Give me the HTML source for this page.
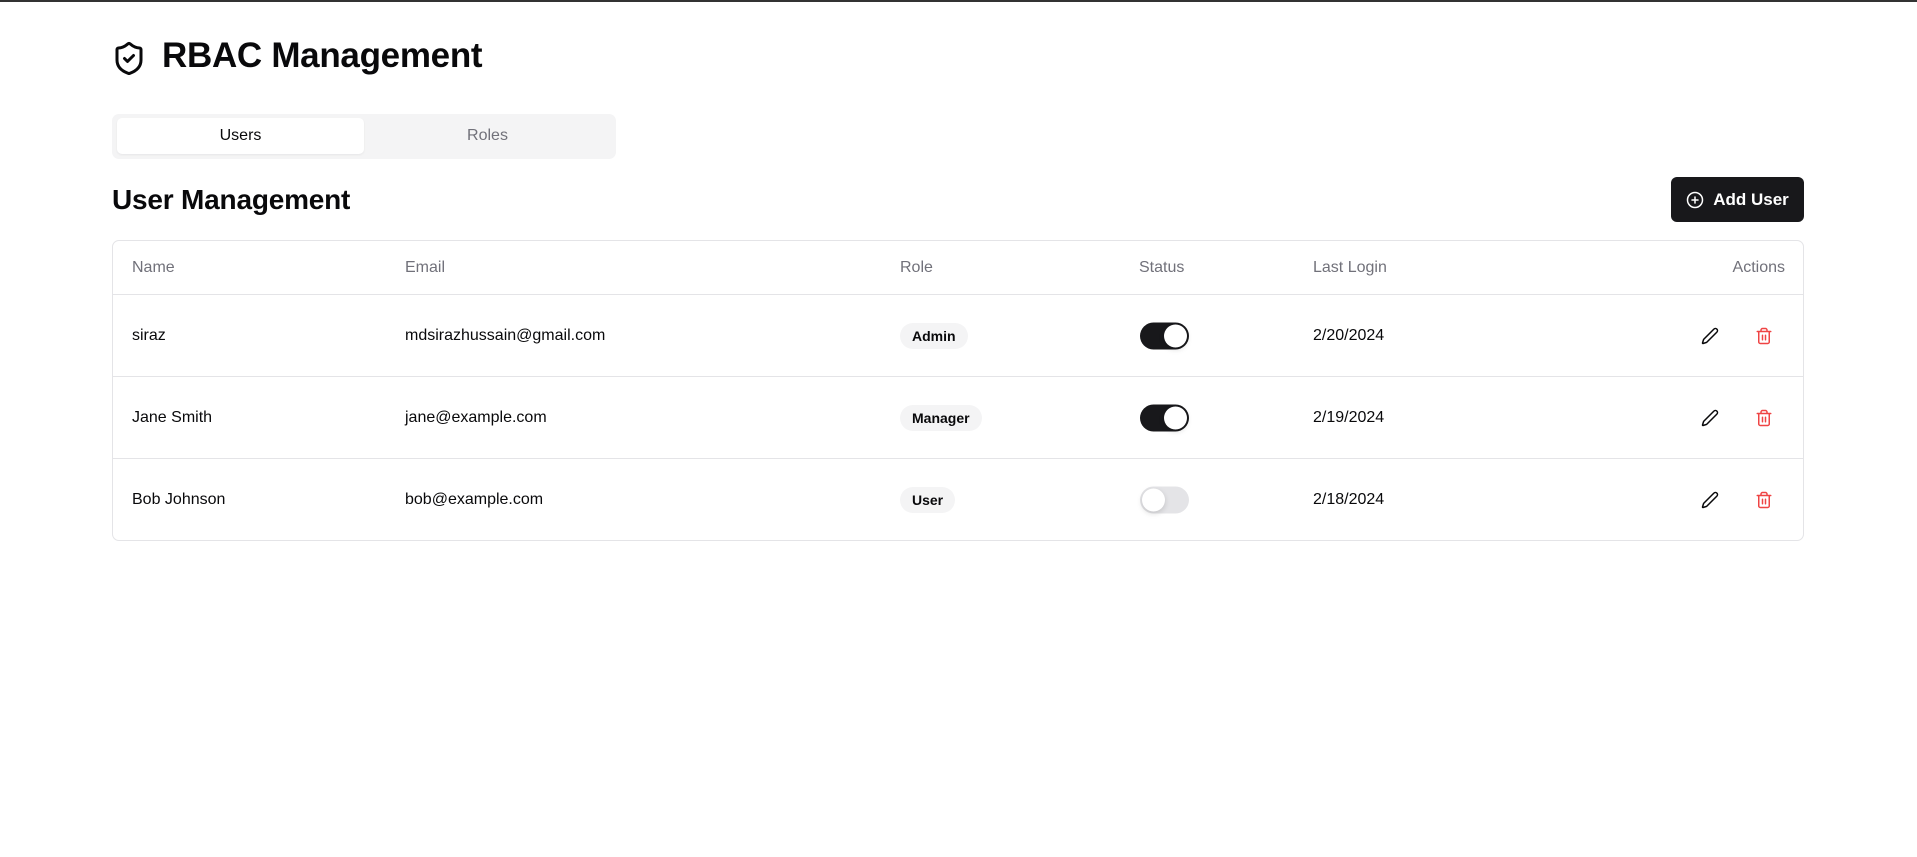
<!DOCTYPE html>
<html><head><meta charset="utf-8"><style>
*{box-sizing:border-box;margin:0;padding:0}
body{width:1917px;height:857px;background:#fff;font-family:"Liberation Sans",sans-serif;color:#09090b;position:relative;overflow:hidden;border-top:2px solid #333}
.abs{position:absolute}
.title{left:162px;top:34px;font-size:35px;font-weight:bold;letter-spacing:-0.3px}
.tabs{left:112px;top:112px;width:504px;height:45px;background:#f4f4f5;border-radius:7px}
.tab{position:absolute;top:4px;height:36px;width:247px;line-height:36px;text-align:center;font-size:16px}
.t1{left:5px;background:#fff;border-radius:5px;box-shadow:0 1px 2px rgba(0,0,0,.06)}
.t2{left:252px;color:#71717a}
.h2{left:112px;top:182px;font-size:28px;font-weight:bold;letter-spacing:-0.2px}
.btn{left:1671px;top:175px;width:133px;height:45px;background:#18181b;border-radius:6px;color:#fff;font-weight:bold;font-size:17px;display:flex;align-items:center;justify-content:center;gap:9px}
.table{left:112px;top:238px;width:1692px;height:301px;border:1px solid #e4e4e7;border-radius:7px}
.row{position:absolute;left:0;width:100%;border-bottom:1px solid #e4e4e7}
.c{position:absolute;top:50%;transform:translateY(-50%);font-size:16px;white-space:nowrap}
.hd .c{color:#71717a}
.badge{background:#f4f4f5;border-radius:13px;font-size:14px;font-weight:bold;padding:5px 12px}
.tg{width:49px;height:27px;border-radius:14px;background:#18181b}
.tg::after{content:"";position:absolute;top:2px;left:24px;width:23px;height:23px;border-radius:50%;background:#fff;box-shadow:0 2px 6px rgba(0,0,0,.15)}
.tg.off{background:#e4e4e7}
.tg.off::after{left:2px}
</style></head><body>
<svg class="abs" style="left:111px;top:38px" width="36" height="37" viewBox="0 0 24 24" fill="none" stroke="#09090b" stroke-width="2" stroke-linecap="round" stroke-linejoin="round"><path d="M20 13c0 5-3.5 7.5-7.66 8.95a1 1 0 0 1-.67-.01C7.5 20.5 4 18 4 13V6a1 1 0 0 1 1-1c2 0 4.5-1.2 6.24-2.72a1.17 1.17 0 0 1 1.52 0C14.51 3.810 17 5 19 5a1 1 0 0 1 1 1z"/><path d="m9 12 2 2 4-4"/></svg>
<div class="abs title">RBAC Management</div>
<div class="abs tabs"><div class="tab t1">Users</div><div class="tab t2">Roles</div></div>
<div class="abs h2">User Management</div>
<div class="abs btn"><svg width="18" height="18" viewBox="0 0 24 24" fill="none" stroke="#fff" stroke-width="2" stroke-linecap="round"><circle cx="12" cy="12" r="10"/><path d="M8 12h8M12 8v8"/></svg>Add User</div>
<div class="abs table">
<div class="row hd" style="top:0;height:54px">
<div class="c" style="left:19px">Name</div><div class="c" style="left:292px">Email</div><div class="c" style="left:787px">Role</div><div class="c" style="left:1026px">Status</div><div class="c" style="left:1200px">Last Login</div><div class="c" style="right:18px">Actions</div></div>
<div class="row" style="top:54px;height:82px">
<div class="c" style="left:19px">siraz</div><div class="c" style="left:292px">mdsirazhussain@gmail.com</div><div class="c badge" style="left:787px">Admin</div><div class="c tg" style="left:1027px"></div><div class="c" style="left:1200px">2/20/2024</div>
<svg class="c" style="left:1588px" width="18" height="18" viewBox="0 0 24 24" fill="none" stroke="#09090b" stroke-width="2" stroke-linecap="round" stroke-linejoin="round"><path d="M21.17 6.81a2.820 2.82 0 0 0-3.99-3.99L3.84 16.17a2 2 0 0 0-.5.83l-1.32 4.35a.5.5 0 0 0 .62.62l4.35-1.32a2 2 0 0 0 .83-.5z"/></svg>
<svg class="c" style="left:1642px" width="18" height="18" viewBox="0 0 24 24" fill="none" stroke="#ef4444" stroke-width="2" stroke-linecap="round" stroke-linejoin="round"><path d="M3 6h18M19 6v14c0 1-1 2-2 2H7c-1 0-2-1-2-2V6M8 6V4c0-1 1-2 2-2h4c1 0 2 1 2 2v2M10 11v6M14 11v6"/></svg></div>
<div class="row" style="top:136px;height:82px">
<div class="c" style="left:19px">Jane Smith</div><div class="c" style="left:292px">jane@example.com</div><div class="c badge" style="left:787px">Manager</div><div class="c tg" style="left:1027px"></div><div class="c" style="left:1200px">2/19/2024</div>
<svg class="c" style="left:1588px" width="18" height="18" viewBox="0 0 24 24" fill="none" stroke="#09090b" stroke-width="2" stroke-linecap="round" stroke-linejoin="round"><path d="M21.17 6.81a2.82 2.82 0 0 0-3.99-3.99L3.84 16.17a2 2 0 0 0-.5.83l-1.32 4.35a.5.5 0 0 0 .62.62l4.35-1.32a2 2 0 0 0 .83-.5z"/></svg>
<svg class="c" style="left:1642px" width="18" height="18" viewBox="0 0 24 24" fill="none" stroke="#ef4444" stroke-width="2" stroke-linecap="round" stroke-linejoin="round"><path d="M3 6h18M19 6v14c0 1-1 2-2 2H7c-1 0-2-1-2-2V6M8 6V4c0-1 1-2 2-2h4c1 0 2 1 2 2v2M10 11v6M14 11v6"/></svg></div>
<div class="row" style="top:218px;height:82px;border-bottom:none">
<div class="c" style="left:19px">Bob Johnson</div><div class="c" style="left:292px">bob@example.com</div><div class="c badge" style="left:787px">User</div><div class="c tg off" style="left:1027px"></div><div class="c" style="left:1200px">2/18/2024</div>
<svg class="c" style="left:1588px" width="18" height="18" viewBox="0 0 24 24" fill="none" stroke="#09090b" stroke-width="2" stroke-linecap="round" stroke-linejoin="round"><path d="M21.17 6.81a2.82 2.82 0 0 0-3.99-3.99L3.84 16.17a2 2 0 0 0-.5.83l-1.32 4.35a.5.5 0 0 0 .62.62l4.35-1.32a2 2 0 0 0 .83-.5z"/></svg>
<svg class="c" style="left:1642px" width="18" height="18" viewBox="0 0 24 24" fill="none" stroke="#ef4444" stroke-width="2" stroke-linecap="round" stroke-linejoin="round"><path d="M3 6h18M19 6v14c0 1-1 2-2 2H7c-1 0-2-1-2-2V6M8 6V4c0-1 1-2 2-2h4c1 0 2 1 2 2v2M10 11v6M14 11v6"/></svg></div>
</div>
</body></html>
